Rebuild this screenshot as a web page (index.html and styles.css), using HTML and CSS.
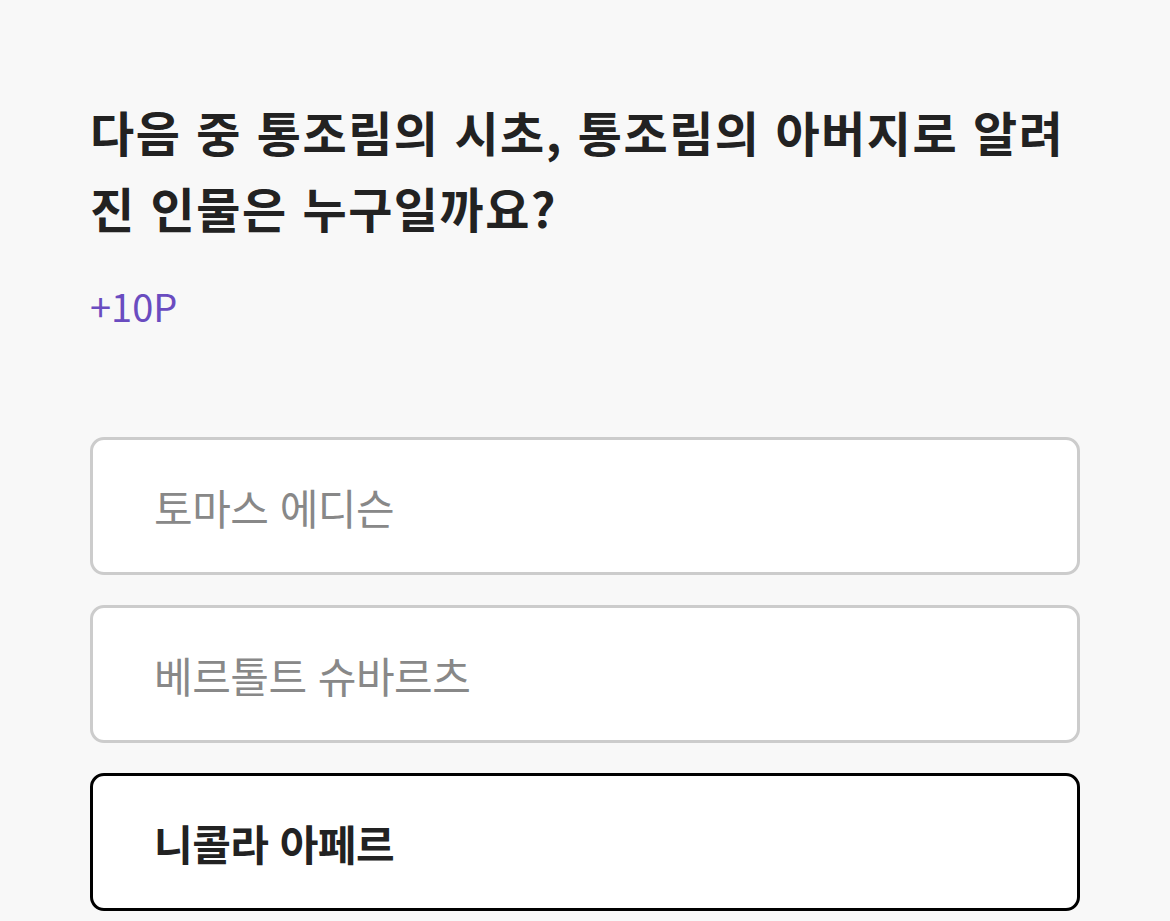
FILE: index.html
```html
<!DOCTYPE html>
<html lang="ko">
<head>
<meta charset="utf-8">
<link rel="stylesheet" href="styles.css">
</head>
<body>
<main class="quiz">
  <h1 class="question">다음 중 통조림의 시초, 통조림의 아버지로 알려진 인물은 누구일까요?</h1>
  <p class="points">+10P</p>
  <ul class="options">
    <li class="option">토마스 에디슨</li>
    <li class="option">베르톨트 슈바르츠</li>
    <li class="option selected">니콜라 아페르</li>
  </ul>
</main>
</body>
</html>
```
FILE: styles.css
```css
html, body {
  margin: 0;
  padding: 0;
  background: #f8f8f8;
}
body {
  font-family: "Noto Sans CJK KR", "Noto Sans", sans-serif;
  color: #222;
}
.quiz {
  padding: 93px 90px 0 90px;
}
.question {
  margin: 0;
  font-size: 48px;
  font-weight: 700;
  line-height: 76px;
  color: #222;
  letter-spacing: 1.5px;
}
.points {
  margin: 36px 0 0 0;
  font-size: 38px;
  line-height: 50px;
  color: #6a4cc0;
}
.options {
  list-style: none;
  margin: 106px 0 0 0;
  padding: 0;
  display: flex;
  flex-direction: column;
  gap: 30px;
}
.option {
  box-sizing: border-box;
  height: 138px;
  display: flex;
  align-items: center;
  padding: 0 61px;
  background: #fff;
  border: 3px solid #cccccc;
  border-radius: 14px;
  font-size: 42px;
  color: #888;
  letter-spacing: -0.5px;
}
.option.selected {
  border-color: #000;
  color: #222;
  font-weight: 700;
}
```
